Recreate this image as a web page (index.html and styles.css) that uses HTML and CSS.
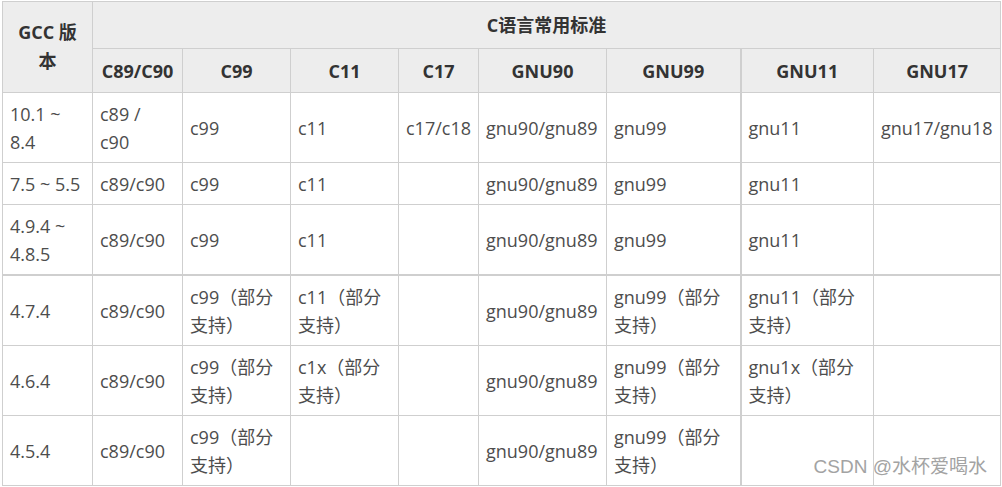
FILE: index.html
```html
<!DOCTYPE html>
<html lang="zh-CN">
<head>
<meta charset="utf-8">
<title>GCC 版本与C语言标准</title>
<link rel="stylesheet" href="styles.css">
</head>
<body>
<div class="wrap">
<table class="std-table">
  <colgroup>
    <col class="c1"><col class="c2"><col class="c3"><col class="c4"><col class="c5"><col class="c6"><col class="c7"><col class="c8"><col class="c9">
  </colgroup>
  <thead>
    <tr class="h1">
      <th rowspan="2" class="ver-head">GCC 版本</th>
      <th colspan="8" class="group-head">C语言常用标准</th>
    </tr>
    <tr class="h2">
      <th>C89/C90</th>
      <th>C99</th>
      <th>C11</th>
      <th>C17</th>
      <th>GNU90</th>
      <th>GNU99</th>
      <th class="thick">GNU11</th>
      <th>GNU17</th>
    </tr>
  </thead>
  <tbody>
    <tr>
      <td>10.1 ~ 8.4</td>
      <td>c89 / c90</td>
      <td>c99</td>
      <td>c11</td>
      <td>c17/c18</td>
      <td>gnu90/gnu89</td>
      <td>gnu99</td>
      <td class="thick">gnu11</td>
      <td>gnu17/gnu18</td>
    </tr>
    <tr>
      <td>7.5 ~ 5.5</td>
      <td>c89/c90</td>
      <td>c99</td>
      <td>c11</td>
      <td></td>
      <td>gnu90/gnu89</td>
      <td>gnu99</td>
      <td class="thick">gnu11</td>
      <td></td>
    </tr>
    <tr>
      <td>4.9.4 ~ 4.8.5</td>
      <td>c89/c90</td>
      <td>c99</td>
      <td>c11</td>
      <td></td>
      <td>gnu90/gnu89</td>
      <td>gnu99</td>
      <td class="thick">gnu11</td>
      <td></td>
    </tr>
    <tr class="sep">
      <td>4.7.4</td>
      <td>c89/c90</td>
      <td>c99（部分支持）</td>
      <td>c11（部分支持）</td>
      <td></td>
      <td>gnu90/gnu89</td>
      <td>gnu99（部分支持）</td>
      <td class="thick">gnu11（部分支持）</td>
      <td></td>
    </tr>
    <tr>
      <td>4.6.4</td>
      <td>c89/c90</td>
      <td>c99（部分支持）</td>
      <td>c1x（部分支持）</td>
      <td></td>
      <td>gnu90/gnu89</td>
      <td>gnu99（部分支持）</td>
      <td class="thick">gnu1x（部分支持）</td>
      <td></td>
    </tr>
    <tr>
      <td>4.5.4</td>
      <td>c89/c90</td>
      <td>c99（部分支持）</td>
      <td></td>
      <td></td>
      <td>gnu90/gnu89</td>
      <td>gnu99（部分支持）</td>
      <td class="thick"></td>
      <td></td>
    </tr>
  </tbody>
</table>
<div class="watermark">CSDN @水杯爱喝水</div>
</div>
</body>
</html>
```

FILE: styles.css
```css
html, body {
  margin: 0;
  padding: 0;
  background: #ffffff;
}

.wrap {
  position: relative;
  width: 1002px;
  height: 487px;
  padding: 1px 0 0 2px;
  box-sizing: border-box;
  overflow: hidden;
}

.std-table {
  border-collapse: collapse;
  table-layout: fixed;
  width: 999px;
  font-family: "Open Sans", "Noto Sans CJK SC", sans-serif;
  font-size: 18px;
  line-height: 28px;
  color: #4d4d4d;
}

.c1 { width: 90px; }
.c2 { width: 90px; }
.c3 { width: 108px; }
.c4 { width: 108px; }
.c5 { width: 80px; }
.c6 { width: 128px; }
.c7 { width: 134px; }
.c8 { width: 133px; }
.c9 { width: 127px; }

.std-table th,
.std-table td {
  border: 1px solid #cfcfcf;
  vertical-align: middle;
}

.std-table th {
  background: #ededed;
  color: #333333;
  font-weight: 700;
  text-align: center;
  padding: 0 8px;
}

.h1 th { height: 46px; }
.h2 th { height: 43px; }

.group-head {
  border-bottom: 2px solid #cfcfcf;
}

.ver-head {
  line-height: 29px;
}

.std-table td {
  text-align: left;
  padding: 7px 8px 6px 7px;
}

.std-table td:first-child {
  padding-right: 4px;
}

.std-table td:nth-child(2) {
  padding-right: 10px;
}

.std-table td:nth-child(5) {
  padding-right: 2px;
}

.sep td {
  border-top: 2px solid #cfcfcf;
}

.std-table .thick {
  border-left: 2px solid #cfcfcf;
}

.watermark {
  position: absolute;
  right: 15px;
  bottom: 8px;
  font-family: "Liberation Sans", "Noto Sans CJK SC", sans-serif;
  font-size: 19px;
  line-height: 24px;
  color: #a3a3a3;
  text-shadow: 0 0 2px #ffffff, 0 0 1px #ffffff;
}
```
